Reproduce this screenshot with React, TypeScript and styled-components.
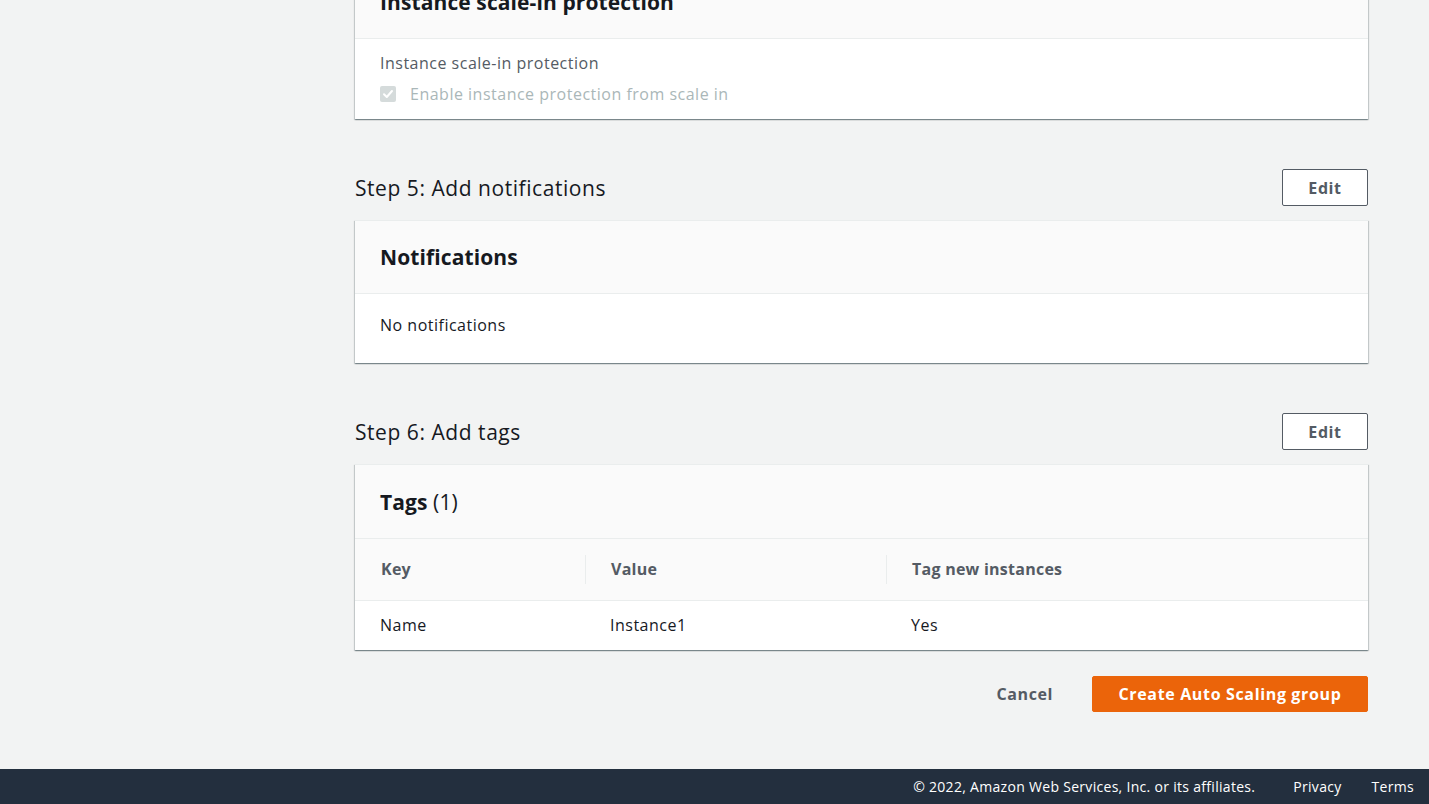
import React from "react";
import styled, { createGlobalStyle } from "styled-components";

const GlobalStyle = createGlobalStyle`
  html, body { margin: 0; padding: 0; }
  body {
    background: #f2f3f3;
    font-family: "Open Sans", "Noto Sans", Arial, sans-serif;
    color: #16191f;
    overflow: hidden;
  }
  * { box-sizing: border-box; }
`;

const Page = styled.div`
  display: flex;
  flex-direction: column;
  min-height: 100vh;
`;

const Main = styled.main`
  margin-top: -35px;
  padding: 0 61px 57px 355px;
  display: flex;
  flex-direction: column;
`;

const Section = styled.section<{ $first?: boolean }>`
  margin-top: ${(p) => (p.$first ? "0" : "50px")};
  display: flex;
  flex-direction: column;
`;

const SectionHeader = styled.div`
  display: flex;
  align-items: center;
  justify-content: space-between;
  height: 37px;
  margin-bottom: 14px;
`;

const StepTitle = styled.h2`
  margin: 0;
  font-size: 21px;
  font-weight: 400;
  letter-spacing: 0.55px;
  color: #16191f;
  line-height: 28px;
`;

const OutlineButton = styled.button`
  height: 37px;
  width: 86px;
  border: 1px solid #545b64;
  border-radius: 2px;
  background: #ffffff;
  color: #545b64;
  font-family: inherit;
  font-size: 16px;
  font-weight: 700;
  letter-spacing: 0.6px;
  cursor: pointer;
`;

const Card = styled.div`
  background: #ffffff;
  box-shadow: 0 1px 1px 0 rgba(0, 28, 36, 0.3), 1px 1px 1px 0 rgba(0, 28, 36, 0.15),
    -1px 1px 1px 0 rgba(0, 28, 36, 0.15);
  border-top: 1px solid #eaeded;
`;

const CardHeader = styled.div<{ $h?: number }>`
  height: ${(p) => p.$h ?? 73}px;
  background: #fafafa;
  border-bottom: 1px solid #eaeded;
  padding: 0 25px;
  display: flex;
  align-items: center;
`;

const CardTitle = styled.h3`
  margin: 0;
  font-size: 21px;
  font-weight: 700;
  letter-spacing: 0.1px;
  line-height: 28px;
  color: #16191f;
`;

const Counter = styled.span`
  font-weight: 400;
  color: #16191f;
`;

const CardBody = styled.div`
  padding: 19px 25px 0;
  height: 69px;
  font-size: 16px;
  letter-spacing: 0.5px;
  line-height: 24px;
`;

const FormBody = styled.div`
  padding: 12px 25px 0;
  height: 80px;
  display: flex;
  flex-direction: column;
  font-size: 16px;
  letter-spacing: 0.5px;
  line-height: 24px;
`;

const FieldLabel = styled.div`
  color: #545b64;
`;

const CheckRow = styled.label`
  display: flex;
  align-items: center;
  gap: 14px;
  margin-top: 7px;
  color: #aab7b8;
`;

const CheckBox = styled.span`
  width: 16px;
  height: 16px;
  border-radius: 2px;
  background: #d5dbdb;
  display: inline-flex;
  align-items: center;
  justify-content: center;
`;

const Table = styled.table`
  width: 100%;
  border-collapse: collapse;
  table-layout: fixed;
  font-size: 16px;
`;

const Th = styled.th<{ $divider?: boolean }>`
  position: relative;
  height: 61px;
  background: #fafafa;
  border-bottom: 1px solid #eaeded;
  text-align: left;
  padding: 0 25px 0 26px;
  color: #545b64;
  font-weight: 700;
  letter-spacing: 0.25px;
  &::before {
    content: "";
    display: ${(p) => (p.$divider ? "block" : "none")};
    position: absolute;
    left: 0;
    top: 16px;
    bottom: 16px;
    border-left: 1px solid #eaeded;
  }
`;

const Td = styled.td`
  height: 50px;
  padding: 0 25px;
  color: #16191f;
  letter-spacing: 0.5px;
`;

const Actions = styled.div`
  display: flex;
  justify-content: flex-end;
  align-items: center;
  margin-top: 26px;
  gap: 39px;
`;

const LinkButton = styled.button`
  border: none;
  background: none;
  font-family: inherit;
  font-size: 16px;
  font-weight: 700;
  letter-spacing: 0.6px;
  color: #545b64;
  padding: 0;
  cursor: pointer;
`;

const PrimaryButton = styled.button`
  height: 36px;
  width: 276px;
  border: 1px solid #eb640a;
  border-radius: 2px;
  background: #eb640a;
  color: #ffffff;
  font-family: inherit;
  font-size: 16px;
  font-weight: 700;
  letter-spacing: 0.65px;
  cursor: pointer;
`;

const Footer = styled.footer`
  height: 35px;
  background: #232f3e;
  color: #ffffff;
  display: flex;
  align-items: center;
  justify-content: flex-end;
  padding: 0 15px;
  font-size: 14px;
  letter-spacing: 0.3px;
  gap: 38px;
`;

const FooterLinks = styled.div`
  display: flex;
  gap: 30px;
`;

const Check = () => (
  <svg width="12" height="12" viewBox="0 0 12 12" fill="none">
    <path d="M2 6.2 L4.8 9 L10 3" stroke="#ffffff" strokeWidth="2" strokeLinecap="round" strokeLinejoin="round" />
  </svg>
);

export default function App() {
  return (
    <Page>
      <GlobalStyle />
      <Main>
        <Section $first>
          <Card>
            <CardHeader>
              <CardTitle>Instance scale-in protection</CardTitle>
            </CardHeader>
            <FormBody>
              <FieldLabel>Instance scale-in protection</FieldLabel>
              <CheckRow>
                <CheckBox>
                  <Check />
                </CheckBox>
                Enable instance protection from scale in
              </CheckRow>
            </FormBody>
          </Card>
        </Section>

        <Section>
          <SectionHeader>
            <StepTitle>Step 5: Add notifications</StepTitle>
            <OutlineButton>Edit</OutlineButton>
          </SectionHeader>
          <Card>
            <CardHeader>
              <CardTitle>Notifications</CardTitle>
            </CardHeader>
            <CardBody>No notifications</CardBody>
          </Card>
        </Section>

        <Section>
          <SectionHeader>
            <StepTitle>Step 6: Add tags</StepTitle>
            <OutlineButton>Edit</OutlineButton>
          </SectionHeader>
          <Card>
            <CardHeader $h={74}>
              <CardTitle>
                Tags <Counter>(1)</Counter>
              </CardTitle>
            </CardHeader>
            <Table>
              <colgroup>
                <col style={{ width: "230px" }} />
                <col style={{ width: "301px" }} />
                <col />
              </colgroup>
              <thead>
                <tr>
                  <Th>Key</Th>
                  <Th $divider>Value</Th>
                  <Th $divider>Tag new instances</Th>
                </tr>
              </thead>
              <tbody>
                <tr>
                  <Td>Name</Td>
                  <Td>Instance1</Td>
                  <Td>Yes</Td>
                </tr>
              </tbody>
            </Table>
          </Card>
        </Section>

        <Actions>
          <LinkButton>Cancel</LinkButton>
          <PrimaryButton>Create Auto Scaling group</PrimaryButton>
        </Actions>
      </Main>
      <Footer>
        <span>© 2022, Amazon Web Services, Inc. or its affiliates.</span>
        <FooterLinks>
          <span>Privacy</span>
          <span>Terms</span>
        </FooterLinks>
      </Footer>
    </Page>
  );
}
